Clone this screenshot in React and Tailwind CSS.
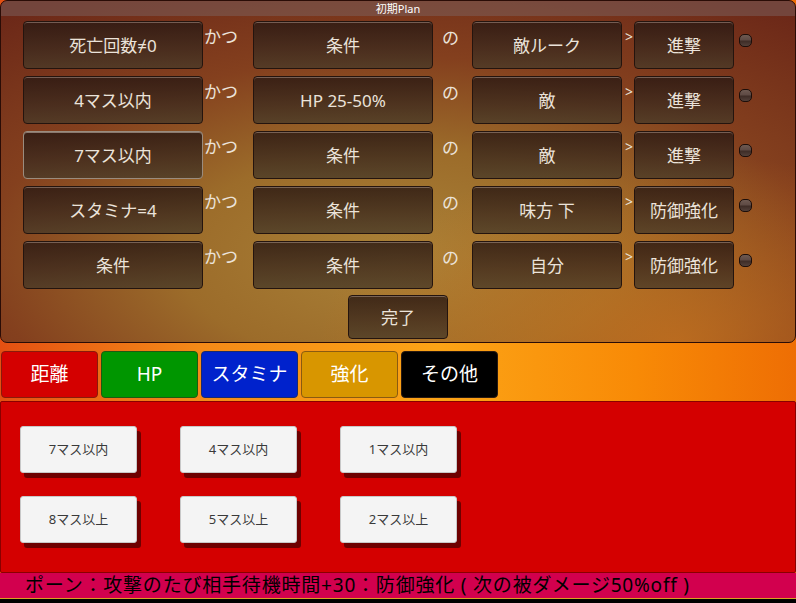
import React from "react";

const rows = [
  ["死亡回数≠0", "条件", "敵ルーク", "進撃"],
  ["4マス以内", "HP 25-50%", "敵", "進撃"],
  ["7マス以内", "条件", "敵", "進撃"],
  ["スタミナ=4", "条件", "味方 下", "防御強化"],
  ["条件", "条件", "自分", "防御強化"],
];

const btnBase =
  "rounded-[4px] border bg-[linear-gradient(180deg,rgba(42,24,18,0.82)_0%,rgba(60,42,30,0.78)_60%,rgba(72,58,40,0.78)_100%)] flex items-center justify-center text-[17px] text-[#ebe3da] leading-none";
const btn = btnBase + " border-[#24140e] shadow-[inset_0_1px_0_rgba(190,170,160,0.45)]";
const btnSel = btnBase + " border-[#9a8c7e] shadow-[inset_0_1px_0_rgba(220,210,200,0.5)]";

function Row({ r, selected }) {
  return (
    <div className="flex items-start h-[48px]">
      <div className={(selected ? btnSel : btn) + " h-[48px] w-[180px]"}>{r[0]}</div>
      <div className="w-[50px] pl-[1px] pt-[6px] text-[17px] leading-[20px] text-[#ebe3da]">かつ</div>
      <div className={btn + " h-[48px] w-[180px]"}>{r[1]}</div>
      <div className="w-[39px] pl-[9px] pt-[7px] text-[17px] leading-[20px] text-[#ebe3da]">の</div>
      <div className={btn + " h-[48px] w-[150px]"}>{r[2]}</div>
      <div className="w-[12px] pl-[3px] pt-[8px] text-[14px] leading-[16px] text-[#ebe3da]">&gt;</div>
      <div className={btn + " h-[48px] w-[100px]"}>{r[3]}</div>
      <div className="ml-[5px] mt-[13px] w-[13px] h-[13px] rounded-[5px] border border-[#1c0e0a] bg-[linear-gradient(180deg,#6e5a52_0%,#5e4a44_45%,#3e2c26_55%,#52403a_100%)]" />
    </div>
  );
}

const tabs = [
  ["距離", "bg-[#d40000] border-[#8a1a0a]"],
  ["HP", "bg-[#009600] border-[#1e5a10]"],
  ["スタミナ", "bg-[#0022cc] border-[#1a2a70]"],
  ["強化", "bg-[#d89600] border-[#8a5a10]"],
  ["その他", "bg-[#000000] border-[#2a1a10]"],
];

const picks = ["7マス以内", "4マス以内", "1マス以内", "8マス以上", "5マス以上", "2マス以上"];

export default function App() {
  return (
    <div
      className="w-[796px] h-[603px] overflow-hidden flex flex-col bg-[linear-gradient(90deg,#e45012_0%,#f48a18_25%,#fca416_55%,#f88a06_80%,#ee6e04_100%)]"
      style={{ fontFamily: '"Noto Sans", "Noto Sans CJK JP", sans-serif' }}
    >
      {/* Top plan panel */}
      <div className="h-[343px] shrink-0 rounded-[7px] border border-[#2a0c06] overflow-hidden flex flex-col bg-[radial-gradient(ellipse_45%_55%_at_85%_100%,rgba(200,115,30,0.75)_0%,rgba(200,115,30,0)_100%),radial-gradient(ellipse_80%_90%_at_50%_75%,#aa8238_0%,#9c6c2a_35%,#84401e_65%,#6c2818_100%)]">
        <div className="h-[15px] shrink-0 bg-[rgba(125,105,105,0.45)] flex items-center justify-center text-[11px] leading-none text-white">
          初期Plan
        </div>
        <div className="flex flex-col gap-[7px] pt-[5px] pl-[22px]">
          {rows.map((r, i) => (
            <Row key={i} r={r} selected={i === 2} />
          ))}
        </div>
        <div className="flex justify-center mt-[6px]">
          <div className={btn + " h-[44px] w-[100px]"}>完了</div>
        </div>
      </div>

      {/* Tabs */}
      <div className="mt-[8px] h-[47px] shrink-0 flex gap-[3px] pl-[1px]">
        {tabs.map(([t, c]) => (
          <div
            key={t}
            className={
              "w-[97px] h-[47px] rounded-[4px] border flex items-center justify-center text-[19px] text-white leading-none " +
              c
            }
          >
            {t}
          </div>
        ))}
      </div>

      {/* Red options panel */}
      <div className="mt-[3px] h-[172px] shrink-0 bg-[#d40000] border border-[#8a0000] rounded-[2px] pt-[24px] pl-[19px]">
        <div className="grid grid-cols-[117px_117px_117px] gap-x-[43px] gap-y-[23px]">
          {picks.map((p) => (
            <div
              key={p}
              className="h-[47px] rounded-[3px] border border-[#c8c8c8] bg-[#f4f4f4] shadow-[4px_5px_0_#6e0000] flex items-center justify-center text-[13px] text-[#3a3a3a] leading-none"
            >
              {p}
            </div>
          ))}
        </div>
      </div>

      {/* Description bar */}
      <div className="h-[26px] shrink-0 bg-[#d2004e] border-b border-[#d8a020] pl-[25px] flex items-center text-[19px] leading-none tracking-[0.8px] text-black whitespace-nowrap">
        ポーン：攻撃のたび相手待機時間+30：防御強化 ( 次の被ダメージ50%off )
      </div>
      <div className="flex-1 bg-black" />
    </div>
  );
}
